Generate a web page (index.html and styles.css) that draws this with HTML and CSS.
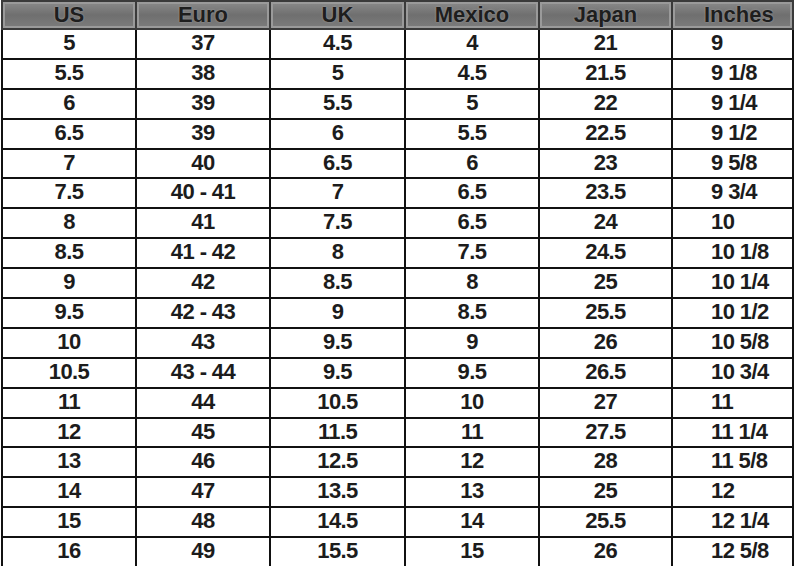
FILE: index.html
```html
<!DOCTYPE html>
<html>
<head>
<meta charset="utf-8">
<link rel="stylesheet" href="styles.css">
</head>
<body>
<table class="chart">
  <colgroup>
    <col class="c1"><col class="c2"><col class="c3"><col class="c4"><col class="c5"><col class="c6">
  </colgroup>
  <thead>
    <tr class="head"><th>US</th><th>Euro</th><th>UK</th><th>Mexico</th><th>Japan</th><th class="inch">Inches</th></tr>
  </thead>
  <tbody>
    <tr><td>5</td><td>37</td><td>4.5</td><td>4</td><td>21</td><td class="inch">9</td></tr>
    <tr><td>5.5</td><td>38</td><td>5</td><td>4.5</td><td>21.5</td><td class="inch">9 1/8</td></tr>
    <tr><td>6</td><td>39</td><td>5.5</td><td>5</td><td>22</td><td class="inch">9 1/4</td></tr>
    <tr><td>6.5</td><td>39</td><td>6</td><td>5.5</td><td>22.5</td><td class="inch">9 1/2</td></tr>
    <tr><td>7</td><td>40</td><td>6.5</td><td>6</td><td>23</td><td class="inch">9 5/8</td></tr>
    <tr><td>7.5</td><td>40 - 41</td><td>7</td><td>6.5</td><td>23.5</td><td class="inch">9 3/4</td></tr>
    <tr><td>8</td><td>41</td><td>7.5</td><td>6.5</td><td>24</td><td class="inch">10</td></tr>
    <tr><td>8.5</td><td>41 - 42</td><td>8</td><td>7.5</td><td>24.5</td><td class="inch">10 1/8</td></tr>
    <tr><td>9</td><td>42</td><td>8.5</td><td>8</td><td>25</td><td class="inch">10 1/4</td></tr>
    <tr><td>9.5</td><td>42 - 43</td><td>9</td><td>8.5</td><td>25.5</td><td class="inch">10 1/2</td></tr>
    <tr><td>10</td><td>43</td><td>9.5</td><td>9</td><td>26</td><td class="inch">10 5/8</td></tr>
    <tr><td>10.5</td><td>43 - 44</td><td>9.5</td><td>9.5</td><td>26.5</td><td class="inch">10 3/4</td></tr>
    <tr><td>11</td><td>44</td><td>10.5</td><td>10</td><td>27</td><td class="inch">11</td></tr>
    <tr><td>12</td><td>45</td><td>11.5</td><td>11</td><td>27.5</td><td class="inch">11 1/4</td></tr>
    <tr><td>13</td><td>46</td><td>12.5</td><td>12</td><td>28</td><td class="inch">11 5/8</td></tr>
    <tr><td>14</td><td>47</td><td>13.5</td><td>13</td><td>25</td><td class="inch">12</td></tr>
    <tr><td>15</td><td>48</td><td>14.5</td><td>14</td><td>25.5</td><td class="inch">12 1/4</td></tr>
    <tr><td>16</td><td>49</td><td>15.5</td><td>15</td><td>26</td><td class="inch">12 5/8</td></tr>
  </tbody>
</table>
</body>
</html>
```

FILE: styles.css
```css
html, body {
  margin: 0;
  padding: 0;
  background: #ffffff;
}
body {
  padding-left: 1px;
  overflow: hidden;
}
.chart {
  border-collapse: collapse;
  table-layout: fixed;
  width: 791px;
  font-family: "Liberation Sans", Arial, sans-serif;
  color: #1c1c1c;
}
.c1 { width: 134px; }
.c2 { width: 134px; }
.c3 { width: 135px; }
.c4 { width: 134px; }
.c5 { width: 133px; }
.c6 { width: 121px; }

.head {
  height: 28px;
}
.head th {
  padding: 0 0 1px 0;
  font-size: 22px;
  font-weight: bold;
  line-height: 24px;
  color: #1e1e1e;
  text-shadow: 0 0 2px rgba(200,200,200,0.6);
  background: linear-gradient(#8a8a8a, #6f6f6f 50%, #7c7c7c);
  border: 2px solid #3a3a3a;
  box-shadow: inset 0 0 0 2px #9a9a9a;
  text-align: center;
  vertical-align: middle;
}
.head th.inch {
  text-align: left;
  padding-left: 31px;
}
tbody tr {
  height: 29.9px;
}
tbody td {
  padding: 0 0 2px 0;
  font-size: 22px;
  letter-spacing: -0.6px;
  font-weight: bold;
  line-height: 24px;
  border: 2px solid #111111;
  text-align: center;
  vertical-align: middle;
}
tbody td.inch {
  text-align: left;
  padding-left: 38px;
}
```
